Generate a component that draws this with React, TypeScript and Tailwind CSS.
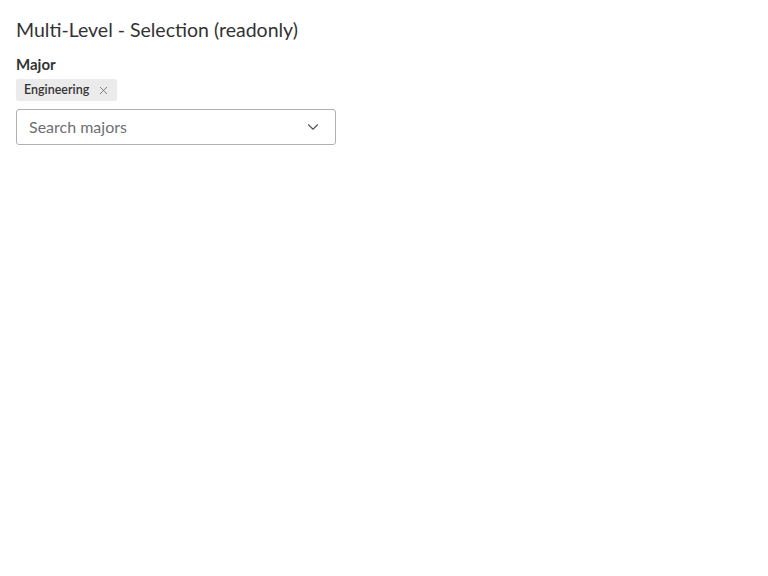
import { X, ChevronDown } from "lucide-react";

export default function App() {
  return (
    <div className="min-h-screen bg-white px-4 pt-[17px]" style={{ fontFamily: '"Lato", "Liberation Sans", sans-serif' }}>
      <h1 className="text-[19.5px] leading-[26px] text-[#333333] font-normal">Multi-Level - Selection (readonly)</h1>
      <div className="mt-[11px] w-[320px]">
        <label className="block text-[15px] leading-[20px] font-bold text-[#333333]">Major</label>
        <div className="mt-[5px] flex">
          <span className="inline-flex h-[22px] items-center gap-[8px] rounded-[2px] bg-[#ebebeb] pl-[8px] pr-[7px] text-[12.5px] font-semibold text-[#333333]">
            Engineering
            <X className="h-[13px] w-[13px] text-[#555555]" strokeWidth={1.3} />
          </span>
        </div>
        <div className="mt-[8px] flex h-[36px] items-center justify-between rounded-[3px] border border-[#b0b0b0] pl-[12px] pr-[13px]">
          <span className="text-[16px] text-[#6f6f6f]">Search majors</span>
          <ChevronDown className="h-[18px] w-[18px] text-[#555555]" strokeWidth={1.5} />
        </div>
      </div>
    </div>
  );
}
